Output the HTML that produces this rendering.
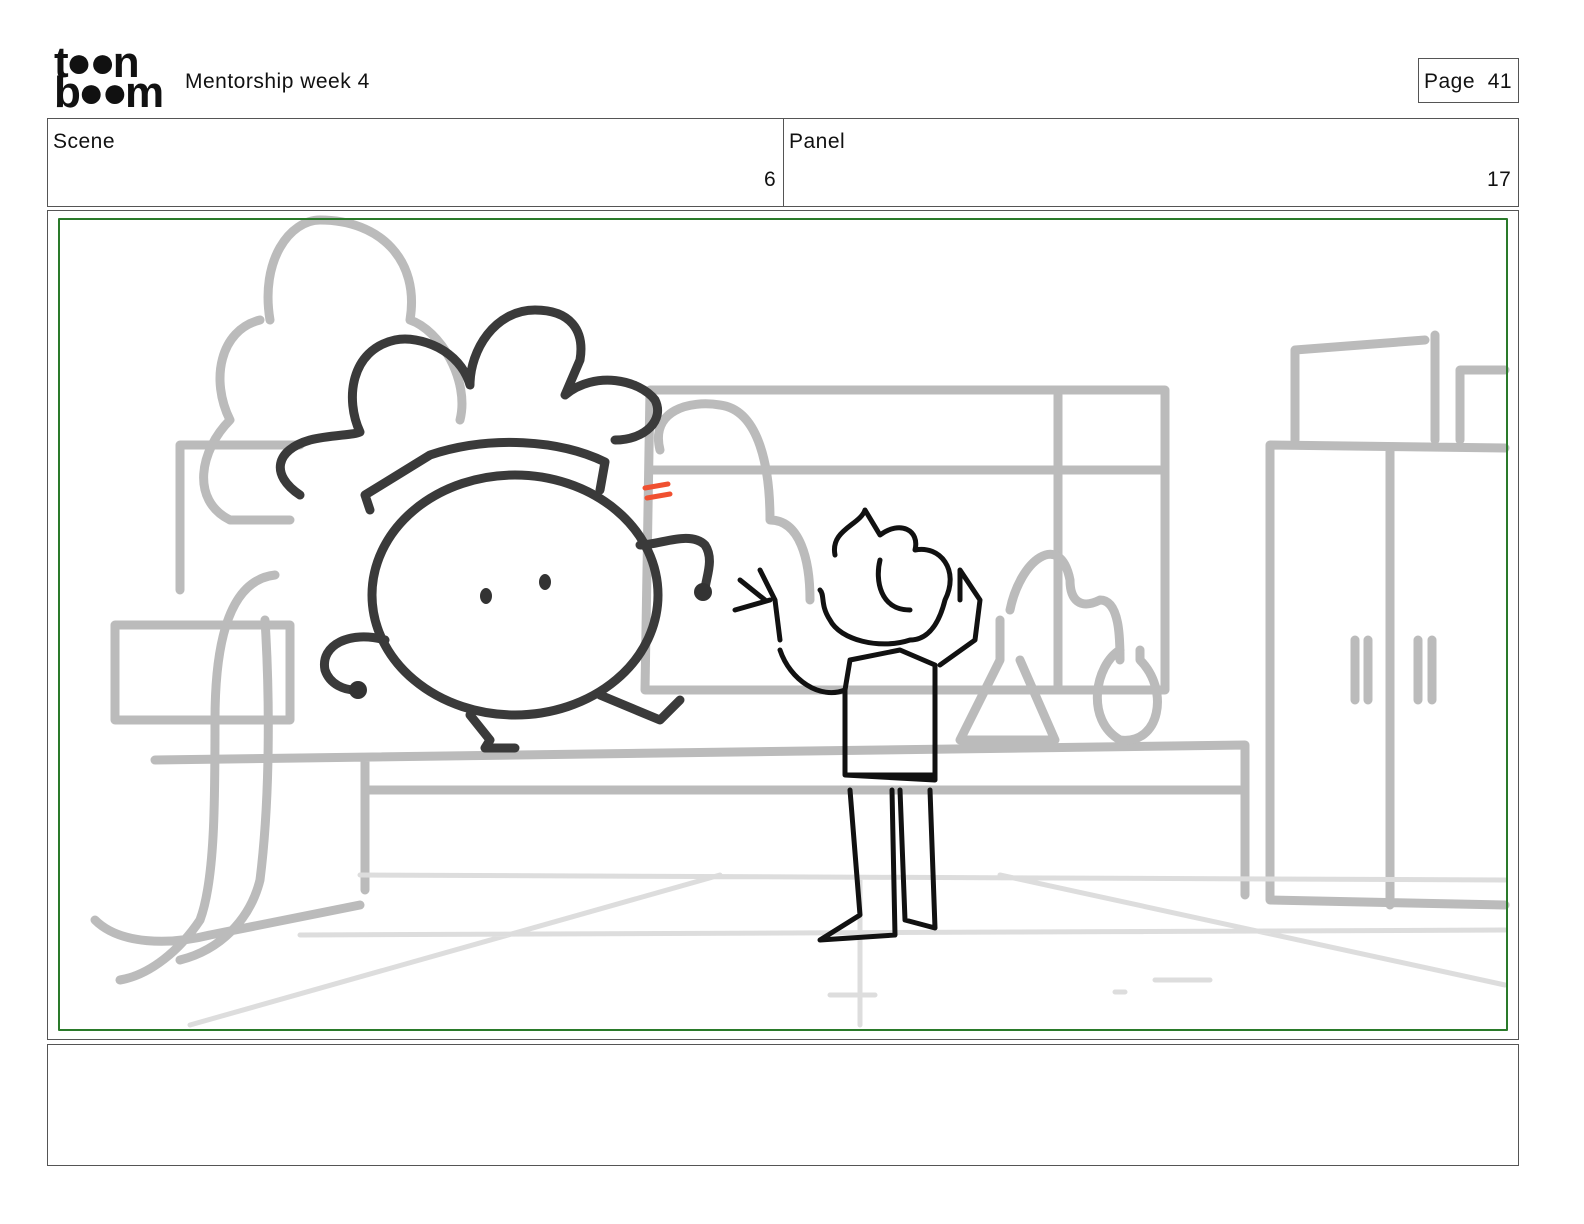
<!DOCTYPE html>
<html><head><meta charset="utf-8"><style>
body{margin:0;width:1584px;height:1224px;background:#fff;position:relative;font-family:"Liberation Sans","DejaVu Sans",sans-serif;color:#111;overflow:hidden}
.a{position:absolute}
.box{position:absolute;border:1px solid #555;box-sizing:border-box}
.t{position:absolute;font-size:21px;letter-spacing:0.5px}
</style></head><body>
<div class="t" style="left:54px;top:48px;font-size:44px;font-weight:bold;line-height:30px;letter-spacing:-3px">t●●n<br>b●●m</div>
<div class="t" style="left:185px;top:70px">Mentorship week 4</div>
<div class="box" style="left:1418px;top:58px;width:101px;height:45px"></div>
<div class="t" style="left:1424px;top:70px">Page&nbsp; 41</div>
<div class="box" style="left:47px;top:118px;width:737px;height:89px"></div>
<div class="box" style="left:783px;top:118px;width:736px;height:89px"></div>
<div class="t" style="left:53px;top:130px">Scene</div>
<div class="t" style="left:764px;top:168px">6</div>
<div class="t" style="left:789px;top:130px">Panel</div>
<div class="t" style="left:1487px;top:168px">17</div>
<div class="box" style="left:47px;top:210px;width:1472px;height:830px"></div>
<div class="box" style="left:47px;top:1044px;width:1472px;height:122px"></div>
<svg class="a" style="left:0;top:0" width="1584" height="1224" fill="none" stroke-linecap="round" stroke-linejoin="round">
<g stroke="#bbb" stroke-width="9">
<path d="M270 320C260 260 290 220 320 220C380 220 420 260 410 320C440 330 470 380 460 420M260 320C220 330 210 380 230 420C200 450 190 500 230 520L290 520"/>
<path d="M650 390L1165 390L1165 690L645 690ZM650 470L1160 470M1058 395L1058 690"/>
<path d="M180 445L300 445M180 445L180 590M115 625L290 625L290 720L115 720ZM155 760L1245 745M365 760L365 890M1245 745L1245 895M365 790L1240 790"/>
<path d="M275 575C230 580 215 640 215 720C215 800 215 880 200 920C180 950 150 975 120 980M265 620C270 700 270 800 260 880C250 920 220 950 180 960M95 920C120 945 170 945 210 935L360 905"/>
<path d="M1295 440L1295 350L1425 340M1435 335L1435 440M1460 440L1460 370L1505 370M1270 445L1270 900L1505 905M1270 445L1505 448M1390 450L1390 905M1355 640L1355 700M1368 640L1368 700M1418 640L1418 700M1432 640L1432 700"/>
<path d="M1010 610C1020 560 1060 530 1070 580C1070 600 1080 610 1100 600C1120 600 1120 640 1120 660M1000 620L1000 660L960 740L1055 740L1020 660M1120 650C1095 665 1085 720 1120 740C1160 745 1170 690 1140 660L1140 650"/>
<path d="M660 450C650 410 690 400 720 405C760 410 770 470 770 520C800 520 810 560 810 600"/>
</g>
<g stroke="#ddd" stroke-width="5"><path d="M190 1025L720 875M300 935L1505 930M360 875L1505 880M1000 875L1505 985M860 880L860 1025M830 995L875 995M1115 992L1125 992M1155 980L1210 980"/></g>
<g stroke="#3a3a3a" stroke-width="9">
<ellipse cx="515" cy="595" rx="143" ry="120"/>
<path d="M370 510L365 495L430 455C490 435 560 440 605 462L600 490M300 495C270 475 275 450 310 440C330 435 355 435 360 432C345 400 350 350 395 340C420 335 460 350 470 385C470 350 495 310 535 310C570 310 585 330 580 360L565 395C595 370 640 380 655 400C665 420 645 440 615 440"/>
<path d="M640 545C660 545 690 530 705 545C715 560 705 580 705 590M385 640C350 630 320 645 325 670C330 685 345 690 355 690M470 715L490 740L485 748L515 748M600 695L660 720L680 700"/>
</g>
<g fill="#333"><ellipse cx="486" cy="596" rx="6" ry="8"/><ellipse cx="545" cy="582" rx="6" ry="8"/><circle cx="703" cy="592" r="9"/><circle cx="358" cy="690" r="9"/></g>
<path d="M645 488L668 484M647 498L670 494" stroke="#f05030" stroke-width="5"/>
<g stroke="#111" stroke-width="5">
<path d="M835 555C830 530 860 525 865 510L880 535C900 520 920 530 915 550C940 545 960 570 945 600C940 620 930 640 910 640C880 650 840 640 830 620C820 605 825 595 820 590"/>
<path d="M880 560C875 580 880 610 910 610M780 640L775 600L760 570M765 600L740 580M770 600L735 610M780 650C790 680 820 700 845 690L850 660L900 650L935 665L935 780L845 775L845 690M960 600L960 570L980 600L975 640L940 665M850 790L860 915L820 940L895 935L892 790M900 790L905 920L935 928L930 790M845 775L935 775"/>
</g>
<rect x="59" y="219" width="1448" height="811" stroke="#2a7a2a" stroke-width="2"/>
</svg>
</body></html>
